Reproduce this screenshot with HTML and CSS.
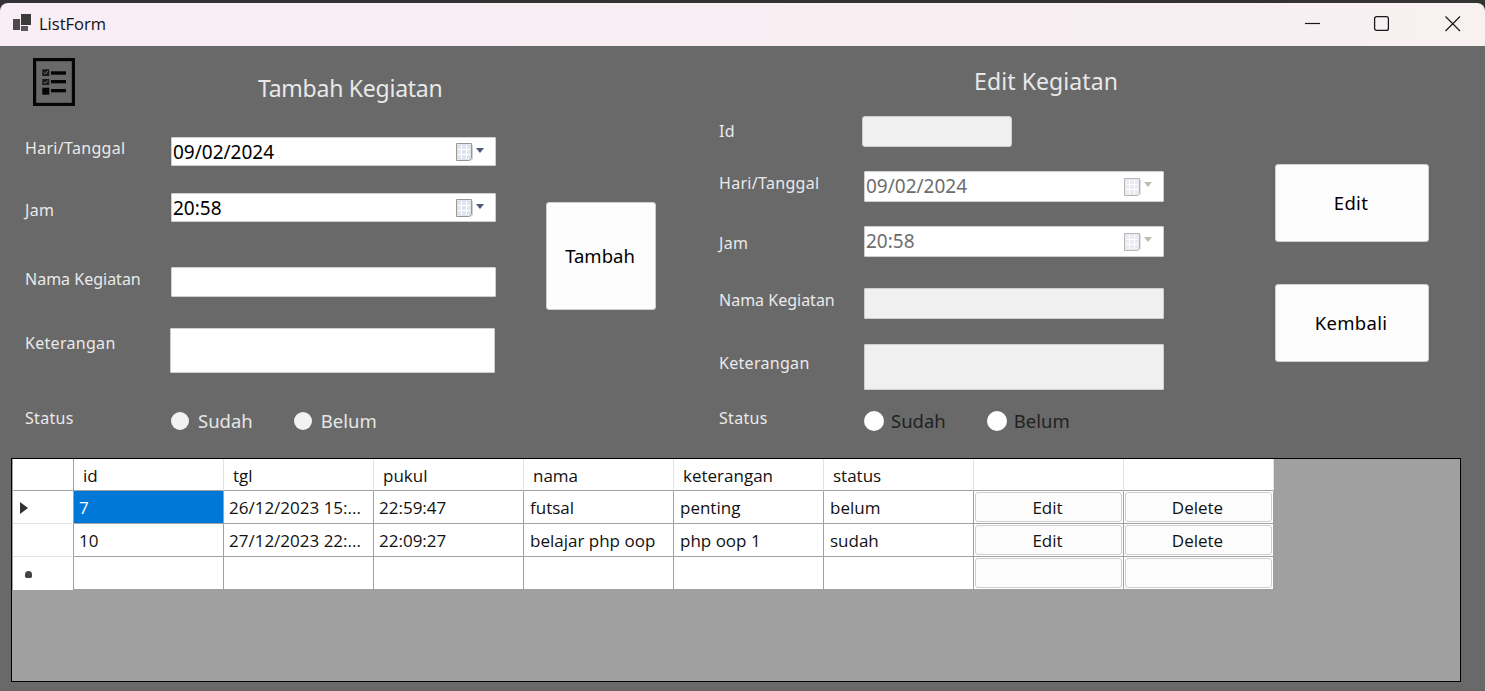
FILE: index.html
```html
<!DOCTYPE html>
<html lang="id">
<head>
<meta charset="utf-8">
<title>ListForm</title>
<link rel="stylesheet" href="styles.css">
</head>
<body>
<svg class="defs" width="0" height="0" aria-hidden="true">
  <symbol id="cal" viewBox="0 0 19 19">
    <path d="M1.500 1.500h15v15l-2 2h-13z" fill="#dfe4ed" stroke="#9a9792"/>
    <path d="M6.500 3v14M11.500 3v14M3 7.500h12M3 12.500h12" stroke="#fff"/>
    <path d="M17.500 3v14l-2 2" fill="none" stroke="#d5d3cf"/>
  </symbol>
</svg>
<div class="window">
  <header class="titlebar">
    <svg class="app-icon" width="20" height="18" viewBox="0 0 20 18">
      <path d="M1 5h7v11H1z" fill="#4a4a4a"/><path d="M9 0h10v11H9z" fill="#3a3a3a"/><path d="M9 12h7v5H9z" fill="#555"/>
    </svg>
    <span class="app-title">ListForm</span>
    <div class="caption">
      <svg class="cap" width="16" height="16" viewBox="0 0 16 16"><path d="M0 7.500h15" stroke="#1a1a1a" stroke-width="1.200"/></svg>
      <svg class="cap" width="16" height="16" viewBox="0 0 16 16"><rect x="-.4" y=".6" width="13.800" height="13.800" rx="2" fill="none" stroke="#1a1a1a" stroke-width="1.300"/></svg>
      <svg class="cap" width="16" height="16" viewBox="0 0 16 16"><path d="M.5 .5l14.500 14.500M15 .5L.5 15" stroke="#1a1a1a" stroke-width="1.200"/></svg>
    </div>
  </header>

  <main class="client">
    <div class="forms">
      <section class="panel panel-add">
        <div class="add-head">
          <svg class="list-icon" width="42" height="48" viewBox="0 0 42 48">
            <rect x="1.600" y="1.600" width="38.800" height="44.800" fill="none" stroke="#050505" stroke-width="3.200"/>
            <rect x="9.300" y="11.300" width="7" height="6.700" fill="#1a1a1a"/><rect x="18" y="13.300" width="15" height="3.400" fill="#050505"/>
            <rect x="9.300" y="21" width="7" height="6" fill="#1a1a1a"/><rect x="18" y="22" width="15" height="3.300" fill="#050505"/>
            <rect x="9.300" y="29.700" width="7" height="7" fill="#050505"/><rect x="18" y="31" width="15" height="3.300" fill="#050505"/>
            <path d="M10.800 14.500l1.500 1.500 2.500-3M10.800 24l1.500 1.500 2.500-3" fill="none" stroke="#8c8c8c" stroke-width=".8"/>
          </svg>
          <h2 class="heading heading-add">Tambah Kegiatan</h2>
        </div>
        <div class="row row-a1"><label class="lbl">Hari/Tanggal</label>
          <div class="field picker"><span>09/02/2024</span><svg class="cal" width="19" height="19"><use href="#cal"/></svg><i class="drop"></i></div></div>
        <div class="row row-a2"><label class="lbl lbl-6">Jam</label>
          <div class="field picker"><span>20:58</span><svg class="cal" width="19" height="19"><use href="#cal"/></svg><i class="drop"></i></div></div>
        <div class="row row-a3"><label class="lbl lbl-1 lbl-tight">Nama Kegiatan</label><div class="field text"></div></div>
        <div class="row row-a4"><label class="lbl lbl-4">Keterangan</label><div class="field area"></div></div>
        <div class="row row-st"><label class="lbl">Status</label>
          <div class="radios"><span class="radio"><i></i>Sudah</span><span class="radio"><i></i>Belum</span></div></div>
      </section>

      <button class="btn btn-add" type="button">Tambah</button>

      <section class="panel panel-edit">
        <h2 class="heading heading-edit">Edit Kegiatan</h2>
        <div class="row row-e0"><label class="lbl lbl-4 lbl-id">Id</label><div class="field off id"></div></div>
        <div class="row row-e1"><label class="lbl lbl-1">Hari/Tanggal</label>
          <div class="field picker dis"><span>09/02/2024</span><svg class="cal" width="19" height="19"><use href="#cal"/></svg><i class="drop"></i></div></div>
        <div class="row row-e2"><label class="lbl lbl-6">Jam</label>
          <div class="field picker dis"><span>20:58</span><svg class="cal" width="19" height="19"><use href="#cal"/></svg><i class="drop"></i></div></div>
        <div class="row row-e3"><label class="lbl lbl-1 lbl-tight">Nama Kegiatan</label><div class="field off text"></div></div>
        <div class="row row-e4"><label class="lbl lbl-8">Keterangan</label><div class="field off area"></div></div>
        <div class="row row-st"><label class="lbl">Status</label>
          <div class="radios radios-dis"><span class="radio"><i></i>Sudah</span><span class="radio"><i></i>Belum</span></div></div>
      </section>

      <div class="side">
        <button class="btn btn-side" type="button">Edit</button>
        <button class="btn btn-side" type="button">Kembali</button>
      </div>
    </div>

    <div class="grid-box">
      <table class="grid">
        <thead>
          <tr><th class="rh"></th><th>id</th><th>tgl</th><th>pukul</th><th>nama</th><th>keterangan</th><th>status</th><th></th><th></th></tr>
        </thead>
        <tbody>
          <tr><td class="rh"><i class="arrow"></i></td><td class="sel">7</td><td>26/12/2023 15:...</td><td>22:59:47</td><td class="nudge">futsal</td><td class="nudge">penting</td><td class="nudge">belum</td><td class="bc"><span class="cbtn">Edit</span></td><td class="bc"><span class="cbtn">Delete</span></td></tr>
          <tr><td class="rh"></td><td>10</td><td>27/12/2023 22:...</td><td>22:09:27</td><td class="nudge">belajar php oop</td><td class="nudge">php oop 1</td><td class="nudge">sudah</td><td class="bc"><span class="cbtn">Edit</span></td><td class="bc"><span class="cbtn">Delete</span></td></tr>
          <tr><td class="rh star"><i class="dot"></i></td><td></td><td></td><td></td><td></td><td></td><td></td><td class="bc"><span class="cbtn"></span></td><td class="bc"><span class="cbtn"></span></td></tr>
        </tbody>
      </table>
    </div>
  </main>
</div>
</body>
</html>
```
FILE: styles.css
```css
* { box-sizing: border-box; }
html, body { margin: 0; height: 100%; overflow: hidden; }
body { background: #333; font-family: "Open Sans", "Noto Sans", sans-serif; }
.defs { display: block; height: 0; }

.window { height: 100%; padding-top: 3px; display: flex; flex-direction: column; }
.titlebar {
  height: 43px; flex: none; display: flex; align-items: center; padding-left: 12px;
  background: linear-gradient(90deg, #f9edf6, #f8f0f1); border-radius: 8px 8px 0 0; color: #111;
}
.app-icon { margin-top: -4px; }
.app-title { margin: -2px 0 0 7px; font-size: 16.500px; }
.caption { margin-left: auto; display: flex; gap: 54px; padding-right: 24px; margin-top: -1px; }
.cap { overflow: visible; }

.client { flex: 1; background: #696969; padding-bottom: 9px; display: flex; flex-direction: column; }
.forms { height: 412px; flex: none; display: flex; align-items: flex-start; }

.panel { flex: none; color: #eee; }
.panel-add { width: 521px; padding-left: 25px; }
.panel-edit { width: 556px; margin-left: 63px; }

.add-head { height: 91px; display: flex; align-items: flex-start; }
.list-icon { margin: 12px 0 0 8px; }
.heading { margin: 0; font: 400 23px/32px "Noto Sans", sans-serif; color: #e8e8e8; }
.heading-add { margin: 26px 0 0 183px; letter-spacing: -.25px; }
.heading-edit { height: 70px; padding: 19px 0 0 255px; letter-spacing: .1px; }

.row { display: flex; align-items: flex-start; }
.lbl { flex: none; font: 400 16px/22px "Noto Sans", sans-serif; color: #eaeaea; letter-spacing: .3px; }
.panel-add .lbl { width: 146px; }
.panel-edit .lbl { width: 145px; }
.lbl-tight { letter-spacing: 0; }
.lbl-1 { margin-top: 1px; }
.lbl-4 { margin-top: 4px; }
.lbl-6 { margin-top: 6px; }
.lbl-8 { margin-top: 8px; }
.panel-edit .lbl-id { width: 143px; }

.row-a1 { height: 56px; }
.row-a2 { height: 74px; }
.row-a3 { height: 61px; }
.row-a4 { height: 79px; }
.row-st { height: 40px; }
.row-e0 { height: 55px; }
.row-e1 { height: 55px; }
.row-e2 { height: 62px; }
.row-e3 { height: 56px; }
.row-e4 { height: 63px; }

.field { background: #fff; border: 1px solid #cfcfcf; border-radius: 1px; }
.picker {
  width: 325px; height: 29px; display: flex; align-items: center; padding: 0 0 0 1px;
  font: 400 19px/28px "Noto Sans", sans-serif; color: #000;
}
.picker span { flex: 1; }
.cal { margin-right: 2px; }
.drop { width: 0; height: 0; border: 4.500px solid transparent; border-top: 5px solid #4b5a78; border-bottom: 0; margin-right: 11px; margin-top: -3px; }
.text { width: 325px; height: 30px; }
.area { width: 325px; height: 45px; margin-left: -1px; }
.off { background: #f0f0f0; }
.id { width: 150px; height: 31px; border-radius: 3px; }
.panel-edit .picker, .panel-edit .text, .panel-edit .area { width: 300px; }
.panel-edit .picker { height: 31px; padding-bottom: 1px; }
.panel-edit .text { height: 31px; }
.panel-edit .area { margin-left: 0; height: 46px; }
.dis { color: #6d6d6d; }
.dis .drop { border-top-color: #bdbdb0; }
.dis .cal { opacity: .7; }

.radios { display: flex; gap: 41px; margin-top: 2px; color: #e6e6e6; font: 400 18.500px/24px "Noto Sans", sans-serif; }
.radio { display: flex; align-items: center; gap: 9px; }
.radio i { width: 18px; height: 18px; border-radius: 50%; background: #f2f2f2; }
.radios-dis { color: #222; }
.radios-dis .radio { gap: 7px; }
.radios-dis .radio i { width: 20px; height: 20px; background: #fff; }

.btn {
  background: #fdfdfd; border: 1px solid #cfcfcf; border-radius: 3px; color: #000;
  font: 400 18.500px/24px "Noto Sans", sans-serif; padding: 0 2px 0 0;
}
.btn-add { flex: none; width: 110px; height: 108px; margin: 156px 0 0 25px; }
.side { flex: none; display: flex; flex-direction: column; gap: 42px; margin: 118px 0 0; }
.btn-side { width: 154px; height: 78px; letter-spacing: .3px; }

.grid-box { margin: 0 24px 0 11px; flex: 1; background: #a0a0a0; border: 1px solid #000; padding: 0 0 0 1px; }
.grid { border-collapse: separate; border-spacing: 0; table-layout: fixed; width: 1261px; font-size: 17px; color: #111; background: #fff; }
.grid th, .grid td { padding: 0; border-right: 1px solid #a0a0a0; border-bottom: 1px solid #a0a0a0; height: 33px; width: 150px; white-space: nowrap; overflow: hidden; text-align: left; font-weight: 400; }
.grid th { height: 32px; padding: 2px 0 0 9px; border-right-color: #e3e3e3; }
.grid td { padding-left: 5px; }
.grid td.nudge { padding-left: 6px; }
.grid th.rh, .grid td.rh { width: 61px; padding: 0 0 0 7px; border-right-color: #a0a0a0; }
.grid td.rh { border-bottom-color: #e3e3e3; }
.grid td.star { border-bottom: 0; }
.grid td.sel { background: #0078d7; color: #fff; }
.grid td.bc { padding: 1px; text-align: center; }
.cbtn { display: block; height: 30px; line-height: 29px; padding-right: 2px; background: #fcfcfc; border: 1px solid #cdcdcd; border-radius: 3px; }
.arrow { display: block; width: 0; height: 0; border-left: 8px solid #333; border-top: 6px solid transparent; border-bottom: 6px solid transparent; margin-top: 1px; }
.dot { display: block; width: 7px; height: 7px; border-radius: 50% 50% 20% 20%; background: #444; margin: 1px 0 0 5px; }
```
